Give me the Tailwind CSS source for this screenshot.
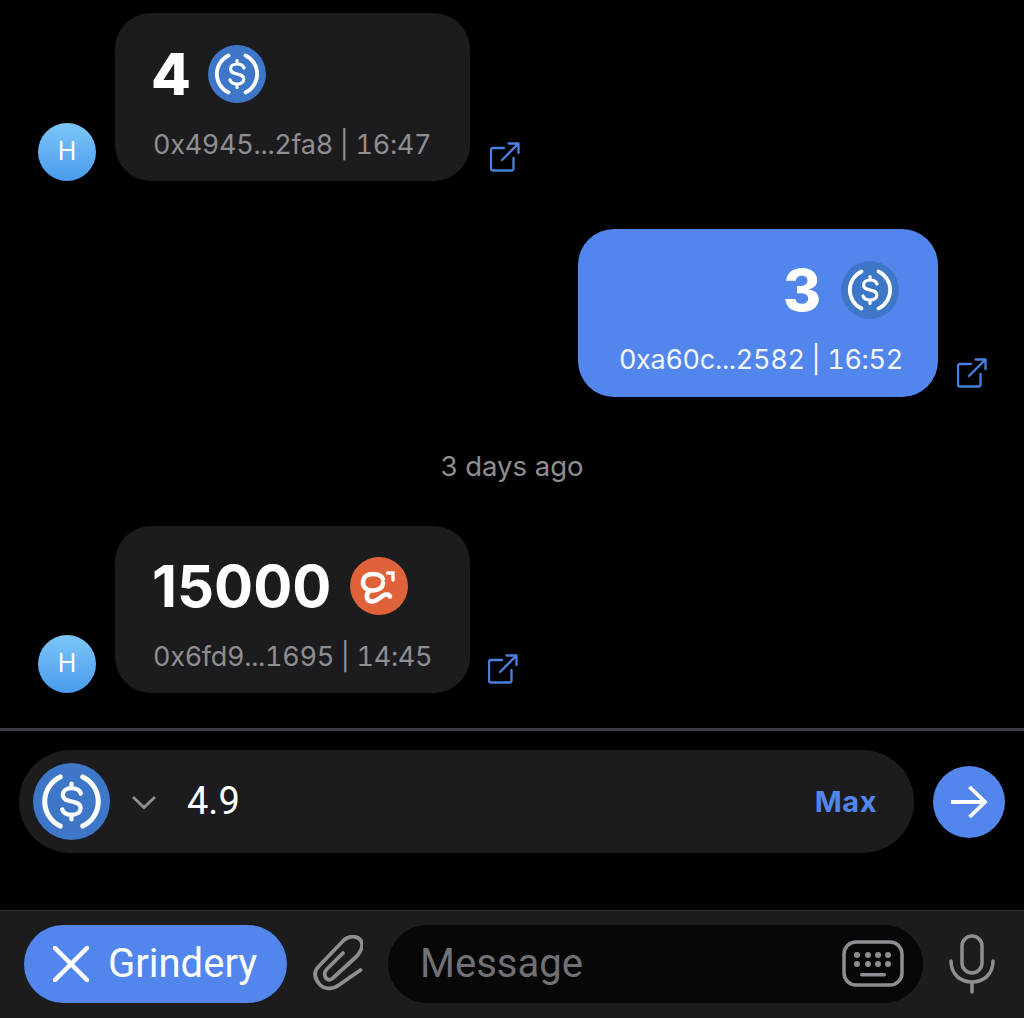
<!DOCTYPE html>
<html lang="en">
<head>
  <meta charset="UTF-8">
  <title>Chat</title>
  <script src="https://cdn.jsdelivr.net/npm/@tailwindcss/browser@4"></script>
</head>
<body class="bg-black w-[1024px] h-[1018px] overflow-hidden font-['Inter',sans-serif] text-white">
  <svg width="0" height="0" class="absolute">
    <symbol id="usdc" viewBox="0 0 58 58">
      <path d="M20.500 10.500 A20.500 20.500 0 0 0 20.500 47.500 M37.500 10.500 A20.500 20.500 0 0 1 37.500 47.500" fill="none" stroke="#fff" stroke-width="3.800" stroke-linecap="round"/>
      <path d="M36 23 C35 20 32.500 19 29 19 C25.500 19 22.500 20.800 22.500 24 C22.500 31 35.800 27 35.800 34 C35.800 37.200 32.800 39 29 39 C25.500 39 23 37.800 22 35 M29 15.500 V19 M29 39 V42.500" fill="none" stroke="#fff" stroke-width="3.200" stroke-linecap="round"/>
    </symbol>
    <symbol id="open" viewBox="0 0 30 30">
      <path d="M14 6 H3 a2 2 0 0 0 -2 2 V26.500 a2 2 0 0 0 2 2 H21.500 a2 2 0 0 0 2 -2 V16 M12 18 L28.500 1.500 M18.500 1.500 H28.500 V11" fill="none" stroke="currentColor" stroke-width="2.300" stroke-linecap="round" stroke-linejoin="round"/>
    </symbol>
  </svg>

  <!-- Messages -->
  <div class="h-[728px] pt-[13px]">
    <div class="flex items-end pl-[38px]">
      <div class="w-[58px] h-[58px] rounded-full bg-gradient-to-b from-[#7cc6f8] to-[#4a9bee] flex items-center justify-center text-[25px] mr-[19px]">H</div>
      <div class="w-[355px] h-[168px] rounded-[36px] bg-[#1c1c1e] pl-[36px] pt-[32px]">
        <div class="flex items-center h-[58px]">
          <span class="text-[58px] font-extrabold leading-none mr-[17px]">4</span>
          <svg class="w-[58px] h-[58px] rounded-full bg-[#3e77c8]"><use href="#usdc"/></svg>
        </div>
        <p class="mt-[24px] ml-[2px] text-[27px] leading-[36px] tabular-nums tracking-[-0.3px] text-[#8e8e93] whitespace-nowrap">0x4945...2fa8 | 16:47</p>
      </div>
      <svg class="w-[30px] h-[30px] ml-[20px] mb-[9px] text-[#4a80e0]"><use href="#open"/></svg>
    </div>

    <div class="flex items-end justify-end mt-[48px] pr-[37px]">
      <div class="w-[360px] h-[168px] rounded-[36px] bg-[#5286ec] pr-[39px] pt-[32px]">
        <div class="flex items-center justify-end h-[58px]">
          <span class="text-[58px] font-extrabold leading-none mr-[20px]">3</span>
          <svg class="w-[58px] h-[58px] rounded-full bg-[#3e77c8]"><use href="#usdc"/></svg>
        </div>
        <p class="mt-[23px] -mr-[4px] text-[27px] leading-[36px] tabular-nums tracking-[-0.3px] text-right whitespace-nowrap text-[#f2f6fe]">0xa60c...2582 | 16:52</p>
      </div>
      <svg class="w-[30px] h-[30px] ml-[19px] mb-[9px] text-[#4a80e0]"><use href="#open"/></svg>
    </div>

    <p class="mt-[52px] text-center text-[27.5px] leading-[34px] text-[#8e8e93]">3 days ago</p>

    <div class="flex items-end pl-[38px] mt-[43px]">
      <div class="w-[58px] h-[58px] rounded-full bg-gradient-to-b from-[#7cc6f8] to-[#4a9bee] flex items-center justify-center text-[25px] mr-[19px]">H</div>
      <div class="w-[355px] h-[167px] rounded-[36px] bg-[#1c1c1e] pl-[37px] pt-[31px]">
        <div class="flex items-center h-[58px]">
          <span class="text-[58px] font-bold leading-none mr-[19px]">15000</span>
          <svg class="w-[58px] h-[58px] rounded-full bg-[#e0623b]" viewBox="0 0 58 58">
            <path d="M33 22 C31 17.500 27 17 23 17 C16.500 17 13 20.500 13 25.500 C13 30.500 16.500 33.500 23 33.500 C28.500 33.500 33 30.500 33 26 M19 34.500 C15.500 37.500 16 44 22 44.500 C28 45 31 38 36 37.500 C38 37.300 39.500 38 40 39.500" fill="none" stroke="#fff" stroke-width="4.500" stroke-linecap="round"/>
            <path d="M37.500 16 H43 V23" fill="none" stroke="#fff" stroke-width="3.400" stroke-linecap="round"/>
          </svg>
        </div>
        <p class="mt-[24px] ml-[1px] text-[27px] leading-[36px] tabular-nums tracking-[-0.3px] text-[#8e8e93] whitespace-nowrap">0x6fd9...1695 | 14:45</p>
      </div>
      <svg class="w-[30px] h-[30px] ml-[18px] mb-[9px] text-[#4a80e0]"><use href="#open"/></svg>
    </div>
  </div>

  <!-- Amount input -->
  <div class="h-[182px] border-t-[3px] border-[#3f3f43] pt-[19px] pl-[19px] pr-[19px]">
    <div class="flex items-center">
      <div class="w-[895px] h-[103px] rounded-full bg-[#1c1c1e] flex items-center pl-[14px] pr-[37px]">
        <svg class="w-[77px] h-[77px] rounded-full bg-[#3e77c8] shrink-0" viewBox="0 0 58 58"><use href="#usdc"/></svg>
        <svg class="w-[26px] h-[16px] ml-[21px]" viewBox="0 0 26 16"><path d="M2 3 L13 13.500 L24 3" fill="none" stroke="#8e8e93" stroke-width="3"/></svg>
        <span class="ml-[30px] text-[38px] text-white font-['Roboto',sans-serif]">4.9</span>
        <span class="ml-auto text-[29px] font-bold tracking-[0.5px] text-[#5286ec]">Max</span>
      </div>
      <button class="w-[72px] h-[72px] ml-[19px] rounded-full bg-[#5286ec] flex items-center justify-center">
        <svg class="w-[36px] h-[36px]" viewBox="0 0 36 36"><path d="M0 18 H34 M18.500 3 L34 18 L18.500 33" fill="none" stroke="#fff" stroke-width="3.800"/></svg>
      </button>
    </div>
  </div>

  <!-- Bottom bar -->
  <div class="h-[108px] bg-[#1c1c1e] border-t border-[#2c2c2e] pt-[14px] pl-[24px] flex items-start">
    <div class="w-[263px] h-[78px] rounded-full bg-[#5286ec] flex items-center pl-[29px]">
      <svg class="w-[36px] h-[36px]" viewBox="0 0 36 36"><path d="M2 2 L34 34 M34 2 L2 34" stroke="#fff" stroke-width="4.500" stroke-linecap="round"/></svg>
      <span class="ml-[19px] text-[40px] font-['Roboto',sans-serif]">Grindery</span>
    </div>
    <svg class="w-[50px] h-[56px] ml-[26px] mt-[10px]" viewBox="0 0 50 56">
      <path d="M47.500 35 L26 50 C19 55 10 54.500 5.500 48 C1 42 1 36 6 31 L31 5 C36 0.500 44 0.500 47.500 5 C50.500 9 49 15 44 21 L20 43 C17 46 13 45 12 41 C11 38 12 36 14 34 L30 18" fill="none" stroke="#8e8e93" stroke-width="3.800" stroke-linecap="round" stroke-linejoin="round"/>
    </svg>
    <div class="w-[535px] h-[78px] ml-[25px] rounded-full bg-[#070707] flex items-center pl-[32px] pr-[19px]">
      <span class="text-[40px] text-[#707075] font-['Roboto',sans-serif]">Message</span>
      <svg class="w-[62px] h-[48px] ml-auto" viewBox="0 0 62 48">
        <rect x="2" y="2" width="58" height="43" rx="12" fill="none" stroke="#8e8e93" stroke-width="3.500"/>
        <g fill="#8e8e93">
          <circle cx="15" cy="15" r="3"/><circle cx="26" cy="15" r="3"/><circle cx="36" cy="15" r="3"/><circle cx="46" cy="15" r="3"/>
          <circle cx="15" cy="24" r="3"/><circle cx="26" cy="24" r="3"/><circle cx="36" cy="24" r="3"/><circle cx="46" cy="24" r="3"/>
          <rect x="18" y="33" width="26" height="3.500" rx="1.700"/>
        </g>
      </svg>
    </div>
    <svg class="w-[46px] h-[60px] ml-[26px] mt-[9px]" viewBox="0 0 46 60">
      <rect x="13" y="2" width="20" height="37" rx="10" fill="none" stroke="#8e8e93" stroke-width="3.500"/>
      <path d="M2 27 C2 40 11 48 23 48 C35 48 44 40 44 27 M23 48 V58" fill="none" stroke="#8e8e93" stroke-width="3.500" stroke-linecap="round"/>
    </svg>
  </div>
</body>
</html>
